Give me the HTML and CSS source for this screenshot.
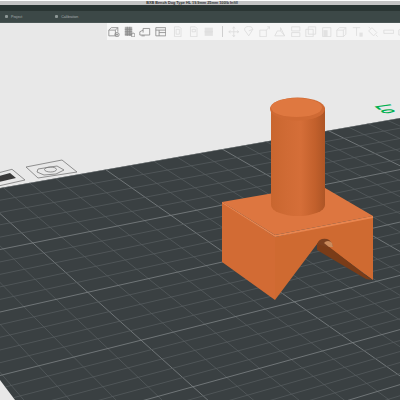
FILE: index.html
```html
<!DOCTYPE html>
<html lang="en">
<head>
  <meta charset="UTF-8">
  <title>BXB Bench Dog Type HL 19.9mm 25mm 100lb Infill</title>
  <link rel="stylesheet" href="styles.css">
</head>
<body>
  <div class="titlebar">BXB Bench Dog Type HL 19.9mm 25mm 100lb Infill</div>
  <div class="tabstrip"></div>
  <div class="navbar">
    <span class="nav-item">Project</span>
    <span class="nav-item">Calibration</span>
  </div>
  <div class="toolbar">
    <svg class="tool" viewBox="0 0 14 14"><path d="M1 5v7h8V5zM1 5l3-3h8v5M9 5l3-3"/><circle cx="11" cy="10.5" r="2.6"/><path d="M9.5 10.5h3M11 9v3"/></svg>
    <svg class="tool" viewBox="0 0 14 14"><path class="fill" d="M1 1h9v11H1z"/><path d="M1 4h9M1 7h9M1 10h9M4 1v11M7 1v11"/><circle cx="11" cy="11" r="2.4"/></svg>
    <svg class="tool" viewBox="0 0 14 14"><path d="M5 8V3h8v8H6M5 5L1 7v4h5M3 12h4"/></svg>
    <svg class="tool" viewBox="0 0 14 14"><path d="M1 2h12v10H1zM1 5h12M5 5v7M5 8h8"/></svg>
    <svg class="tool off first-off" viewBox="0 0 14 14"><path d="M3 1h6l2 2v10H3zM5 4h4v6H5z"/></svg>
    <svg class="tool off" viewBox="0 0 14 14"><path d="M3 1h6l2 2v10H3zM5 4h4v3H5z"/></svg>
    <svg class="tool off" viewBox="0 0 14 14"><path class="fill" d="M2 2h10v10H2z"/><path d="M2 7h10"/></svg>
    <span class="tool-sep"></span>
    <svg class="tool off" viewBox="0 0 14 14"><path d="M7 1v12M1 7h12M7 1L5.500 3M7 1l1.500 2M7 13l-1.500-2M7 13l1.500-2M1 7l2-1.500M1 7l2 1.500M13 7l-2-1.500M13 7l-2 1.500"/></svg>
    <svg class="tool off" viewBox="0 0 14 14"><path d="M2 5a5 4 0 0 1 10-1L7 12zM7 6l5-2"/></svg>
    <svg class="tool off" viewBox="0 0 14 14"><path d="M1 5h8v8H1zM9 5l4-4M10 1h3v3"/></svg>
    <svg class="tool off" viewBox="0 0 14 14"><path d="M1 12l3-6h4v-4l5 10zM8 6l5 6"/></svg>
    <svg class="tool off" viewBox="0 0 14 14"><path d="M2 1h10v5H2zM2 8h10v5H2z"/></svg>
    <svg class="tool off" viewBox="0 0 14 14"><path d="M1 4h9v9H1zM4 1h9v9H4z"/></svg>
    <svg class="tool off" viewBox="0 0 14 14"><path class="fill" d="M3 5h5v8H3z"/><path d="M2 2h10v11H2z"/></svg>
    <svg class="tool off" viewBox="0 0 14 14"><path d="M1 5h8v8H1zM1 5l3-3h8v8l-3 3M9 5l3-3"/></svg>
    <svg class="tool off" viewBox="0 0 14 14"><path d="M1 2h9M5.500 2v10"/><path class="fill" d="M9 8h4v5H9z"/></svg>
    <svg class="tool off" viewBox="0 0 14 14"><path d="M2 6l4-4 6 6-4 4zM4 3L2 1M11 11l2 2"/></svg>
    <svg class="tool off" viewBox="0 0 14 14"><path d="M1 5h12v4H1z"/></svg>
    <svg class="tool off" viewBox="0 0 14 14"><path d="M1 5l5-3h8v9H1z"/></svg>
  </div>

  <svg class="scene" viewBox="0 40 400 360">
    <defs>
      <clipPath id="plate-clip"><polygon points="0,188 400,118 400,400 15,400 0,380"/></clipPath>
      <linearGradient id="cyl-side" x1="0" x2="1" y1="0" y2="0">
        <stop offset="0" stop-color="#c9662f"/>
        <stop offset=".3" stop-color="#d06b35"/>
        <stop offset=".55" stop-color="#d56e38"/>
        <stop offset=".82" stop-color="#c2602c"/>
        <stop offset="1" stop-color="#ad5526"/>
      </linearGradient>
    </defs>

    <polygon class="plate" points="0,188 400,118 400,400 15,400 0,380"/>
    <g id="grid" clip-path="url(#plate-clip)"></g>

    <!-- bed markers -->
    <polygon class="mark-line" points="-6,174 12,169.300 25,180 -6,187"/>
    <polygon class="mark-dark" points="-6,177.500 10,173 16,178 -6,183"/>
    <polygon class="mark-line" points="26,167 62,160 77,172 38,178"/>
    <polygon class="mark-line" points="38,169 57,166 64,170 56,174 44,175 37,172"/>
    <ellipse class="mark-line" cx="50.500" cy="169.500" rx="6" ry="2.500"/>

    <text class="bed-text" transform="matrix(.7 .55 -1.9 .26 374 106)">Lo</text>

    <!-- printed part -->
    <polygon class="face-left" points="222,202 275,237 275,300 222,262"/>
    <polygon class="face-front" points="275,237 373,216 373,280 328,247 317,244 275,300"/>
    <polygon class="face-inner" points="317,243 328,246 372,280 366,279 317,250"/>
    <path class="hole" d="M317 244a8 8 0 0 1 15 0l1 3h-6z"/>
    <path class="hole-lit" d="M324 243a5 5 0 0 1 8 0l1 4h-4z"/>
    <polygon class="face-top" points="222,202 320,185 373,216 275,235"/>
    <polygon class="face-edge" points="222,202 275,235 373,216 373,218 275,237 222,203"/>
    <path class="cyl-side" d="M271 108V205a27 11 0 0 0 54 0V108z"/>
    <ellipse class="cyl-chamfer" cx="297.500" cy="109" rx="27.500" ry="11.500"/>
    <ellipse class="cyl-top" cx="296.500" cy="107.500" rx="25.500" ry="9.500"/>
  </svg>

  <script src="script.js"></script>
</body>
</html>
```

FILE: styles.css
```css
html, body {
  margin: 0;
  height: 100%;
}
body {
  width: 400px;
  height: 400px;
  overflow: hidden;
  background: #e8e8e8;
  font-family: "Liberation Sans", Arial, sans-serif;
}
.titlebar {
  height: 4px;
  line-height: 4px;
  padding-right: 16px;
  border-top: 1px solid #fff;
  background: #c4c4c4;
  color: #333;
  font-size: 3.800px;
  font-weight: bold;
  text-align: center;
  white-space: nowrap;
  overflow: hidden;
}
.tabstrip {
  height: 6px;
  background: #2a3533;
}
.navbar {
  height: 12px;
  display: flex;
  align-items: center;
  padding-left: 5px;
  gap: 33px;
  background: #3c4847;
  border-bottom: 1px solid #4a5655;
  box-sizing: border-box;
}
.nav-item {
  display: flex;
  align-items: center;
  gap: 3px;
  color: #a8b0af;
  font-size: 3.600px;
}
.nav-item::before {
  content: "";
  width: 3px;
  height: 3px;
  border-radius: 1px;
  background: #8d9695;
}
.toolbar {
  height: 17px;
  margin-left: 107px;
  padding-left: 1px;
  display: flex;
  align-items: center;
  gap: 4px;
  background: #f6f6f6;
  overflow: hidden;
}
.tool {
  flex: none;
  width: 11.500px;
  height: 11.500px;
  fill: none;
  stroke: #8a8a8a;
  stroke-width: 1;
}
.tool.off {
  stroke: #dcdcdc;
}
.first-off {
  margin-left: 2px;
}
.tool .fill {
  fill: #b0b0b0;
  stroke: none;
}
.tool.off .fill {
  fill: #e2e2e2;
}
.tool-sep {
  flex: none;
  width: 1px;
  height: 11px;
  margin: 0 1px 0 3px;
  background: #cfcfcf;
}
.scene {
  display: block;
  width: 400px;
  height: 360px;
}
.plate {
  fill: #3a4042;
}
.grid-minor {
  stroke: #595f61;
  stroke-width: .7;
}
.grid-major {
  stroke: #7d8385;
  stroke-width: .8;
}
.mark-line {
  fill: none;
  stroke: #777;
  stroke-width: .8;
}
.mark-dark {
  fill: #3a3a3a;
}
.bed-text {
  fill: #00b050;
  font-size: 12px;
  font-weight: bold;
}
.face-left {
  fill: #d26b34;
}
.face-front {
  fill: #cf6a31;
}
.face-top {
  fill: #dd7640;
}
.face-edge {
  fill: #e98650;
}
.face-inner {
  fill: #7a3c18;
}
.hole {
  fill: #7a4020;
}
.hole-lit {
  fill: #c98a5c;
}
.cyl-side {
  fill: url(#cyl-side);
}
.cyl-chamfer {
  fill: #cf6a34;
}
.cyl-top {
  fill: #df7840;
}
```

FILE: script.js
```js
// bed grid: two fans of lines, one running to each vanishing point
const grid = document.getElementById('grid');
const vpA = { x: 2500, y: -250 };
const vpB = { x: -600, y: -325 };

function addLine(vp, x, y, major) {
  // start at the vanishing point and run out past the picture
  const line = document.createElementNS('http://www.w3.org/2000/svg', 'line');
  line.setAttribute('x1', vp.x);
  line.setAttribute('y1', vp.y);
  line.setAttribute('x2', vp.x + (x - vp.x) * 6);
  line.setAttribute('y2', vp.y + (y - vp.y) * 6);
  line.setAttribute('class', major ? 'grid-major' : 'grid-minor');
  grid.appendChild(line);
}

// spaced along the back edge of the bed, tightening toward vpA
for (let i = -40; i < 60; i++) {
  const k = i * 0.0108;
  if (k <= -0.9) continue;
  addLine(vpB, (k * vpA.x - 24) / (k + 1), (k * vpA.y + 192) / (k + 1), i % 5 === 0);
}

// spaced down the left side of the picture
for (let i = 0; i < 60; i++) {
  addLine(vpA, 0, 188 + 12.2 * i + 0.02 * i * i, i % 5 === 0);
}
```
